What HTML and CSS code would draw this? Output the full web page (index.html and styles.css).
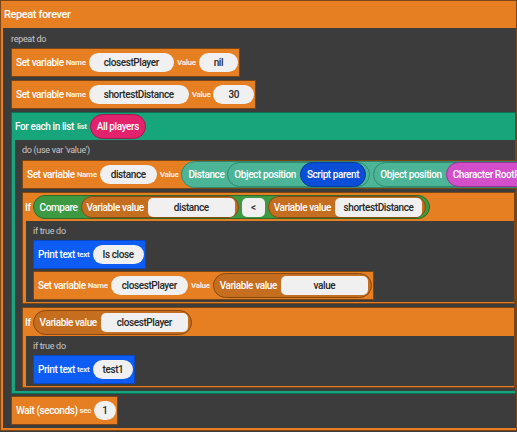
FILE: index.html
```html
<!DOCTYPE html>
<html lang="en">
<head>
<meta charset="utf-8">
<title>Script blocks</title>
<link rel="stylesheet" href="styles.css">
</head>
<body>
<div class="block orange wrap outer">
  <div class="head"><span class="title big">Repeat forever</span></div>
  <div class="body">
    <div class="slot-label">repeat do</div>
    <div class="stack">
      <div class="block orange stmt">
        <span class="title">Set variable</span>
        <span class="arg">Name</span>
        <span class="pill roomy">closestPlayer</span>
        <span class="arg">Value</span>
        <span class="pill roomy">nil</span>
      </div>
      <div class="block orange stmt">
        <span class="title">Set variable</span>
        <span class="arg">Name</span>
        <span class="pill roomy">shortestDistance</span>
        <span class="arg">Value</span>
        <span class="pill roomy">30</span>
      </div>

      <div class="block green wrap loop">
        <div class="head">
          <span class="title">For each in list</span>
          <span class="arg">list</span>
          <span class="expr pink leafy">All players</span>
        </div>
        <div class="body">
          <div class="slot-label">do (use var 'value')</div>
          <div class="stack">
            <div class="block orange stmt">
              <span class="title">Set variable</span>
              <span class="arg">Name</span>
              <span class="pill snug">distance</span>
              <span class="arg">Value</span>
              <span class="expr teal tall">
                <span>Distance</span>
                <span class="expr teal">
                  <span>Object position</span>
                  <span class="expr navy leafy">Script parent</span>
                </span>
                <span class="expr teal">
                  <span>Object position</span>
                  <span class="expr magenta leafy">Character RootPart</span>
                </span>
              </span>
            </div>

            <div class="block orange wrap cond">
              <div class="head">
                <span class="title">If</span>
                <span class="expr leaf short">
                  <span>Compare</span>
                  <span class="expr rust slim">
                    <span>Variable value</span>
                    <span class="field">distance</span>
                  </span>
                  <span class="field op">&lt;</span>
                  <span class="expr rust slim">
                    <span>Variable value</span>
                    <span class="field">shortestDistance</span>
                  </span>
                </span>
              </div>
              <div class="body">
                <div class="slot-label">if true do</div>
                <div class="stack">
                  <div class="block blue stmt">
                    <span class="title">Print text</span>
                    <span class="arg">text</span>
                    <span class="pill">Is close</span>
                  </div>
                  <div class="block orange stmt">
                    <span class="title">Set variable</span>
                    <span class="arg">Name</span>
                    <span class="pill snug">closestPlayer</span>
                    <span class="arg">Value</span>
                    <span class="expr rust">
                      <span>Variable value</span>
                      <span class="field">value</span>
                    </span>
                  </div>
                </div>
              </div>
            </div>

            <div class="block orange wrap cond">
              <div class="head">
                <span class="title">If</span>
                <span class="expr rust">
                  <span>Variable value</span>
                  <span class="field">closestPlayer</span>
                </span>
              </div>
              <div class="body">
                <div class="slot-label">if true do</div>
                <div class="stack">
                  <div class="block blue stmt">
                    <span class="title">Print text</span>
                    <span class="arg">text</span>
                    <span class="pill">test1</span>
                  </div>
                </div>
              </div>
            </div>
          </div>
        </div>
      </div>

      <div class="block orange stmt wait">
        <span class="title">Wait (seconds)</span>
        <span class="arg">sec</span>
        <span class="pill tight">1</span>
      </div>
    </div>
  </div>
</div>
</body>
</html>
```

FILE: styles.css
```css
* {
  box-sizing: border-box;
}

html,
body {
  margin: 0;
  padding: 0;
}

body {
  width: 517px;
  height: 432px;
  overflow: hidden;
  background: #3c3c3c;
  font-family: Roboto, "Noto Sans", sans-serif;
  font-size: 10px;
  letter-spacing: -0.4px;
  color: #fff;
}

/* block palette */
.orange  { --fill: #e67f22; --edge: #7b4613; }
.green   { --fill: #17a57b; --edge: #0d6e52; }
.blue    { --fill: #0d5cf4; --edge: #0a47c4; }
.teal    { --fill: #4db597; --edge: #2f8a6f; }
.navy    { --fill: #0b4fd9; --edge: #07389e; }
.magenta { --fill: #d24fc9; --edge: #9e3296; }
.pink    { --fill: #e3226d; --edge: #a8164f; }
.leaf    { --fill: #3d9a43; --edge: #286d2d; }
.rust    { --fill: #c56e1f; --edge: #8a4811; }

.block {
  border: 1px solid var(--edge);
  background: var(--fill);
}

/* single-line statement */
.stmt {
  display: flex;
  align-items: center;
  gap: 3px;
  height: 29px;
  width: max-content;
  padding: 0 1px 0 4px;
  white-space: nowrap;
}

.title {
  font-weight: 500;
}

.title.big {
  font-size: 11px;
}

.arg {
  font-size: 8px;
  font-weight: 700;
  color: rgba(255, 255, 255, 0.88);
  letter-spacing: -0.3px;
}

.stmt .title + .arg {
  margin-left: -1px;
}

/* C-shaped containers */
.wrap {
  display: flex;
  flex-direction: column;
  align-self: stretch;
}

.wrap > .head {
  display: flex;
  align-items: center;
  gap: 3px;
  height: 27px;
  padding-left: 3px;
  white-space: nowrap;
}

.wrap > .body {
  background: #3c3c3c;
}

.outer {
  padding-bottom: 2px;
}

.outer > .body {
  margin-left: 2px;
  padding: 5px 0 3px 8px;
}

.loop {
  padding-bottom: 2px;
}

.loop > .body {
  margin-left: 3px;
  padding: 4px 0 3px 7px;
}

.cond {
  padding-bottom: 1px;
}

.cond > .head {
  height: 28px;
  gap: 2px;
  padding-left: 2px;
}

.cond > .body {
  margin-left: 3px;
  padding: 4px 0 2px 7px;
}

.slot-label {
  height: 13px;
  line-height: 13px;
  font-size: 9px;
  letter-spacing: -0.3px;
  color: #c9c9c9;
  margin-bottom: 2px;
}

.loop > .body > .slot-label {
  margin-bottom: 3px;
}

.stack {
  display: flex;
  flex-direction: column;
  align-items: flex-start;
  gap: 3px;
}

.cond .stack {
  gap: 2px;
}

.wait {
  margin-top: -1px;
}

/* literal inputs */
.pill {
  display: flex;
  align-items: center;
  justify-content: center;
  height: 19px;
  padding: 0 10px;
  border-radius: 10px;
  background: #f0f0f0;
  color: #262626;
  font-weight: 500;
}

.pill.roomy {
  padding: 0 15px;
}

.pill.snug {
  padding: 0 11px;
}

.pill.tight {
  padding: 0 8px;
}

.field {
  display: flex;
  align-items: center;
  justify-content: center;
  width: 87px;
  height: 19px;
  border-radius: 5px;
  background: #f0f0f0;
  color: #262626;
  font-weight: 500;
}

.field.op {
  width: 23px;
}

/* reporter expressions */
.expr {
  display: flex;
  align-items: center;
  gap: 4px;
  height: 25px;
  padding: 0 3px 0 6px;
  border: 1px solid var(--edge);
  border-radius: 13px;
  background: var(--fill);
  white-space: nowrap;
  font-weight: 500;
}

.expr.tall {
  height: 27px;
  border-radius: 14px;
  gap: 3px;
}

.expr.short {
  height: 24px;
  gap: 3px;
}

.expr.slim {
  height: 22px;
  padding-left: 5px;
}

.expr.leafy {
  padding: 0 6px;
}
```
